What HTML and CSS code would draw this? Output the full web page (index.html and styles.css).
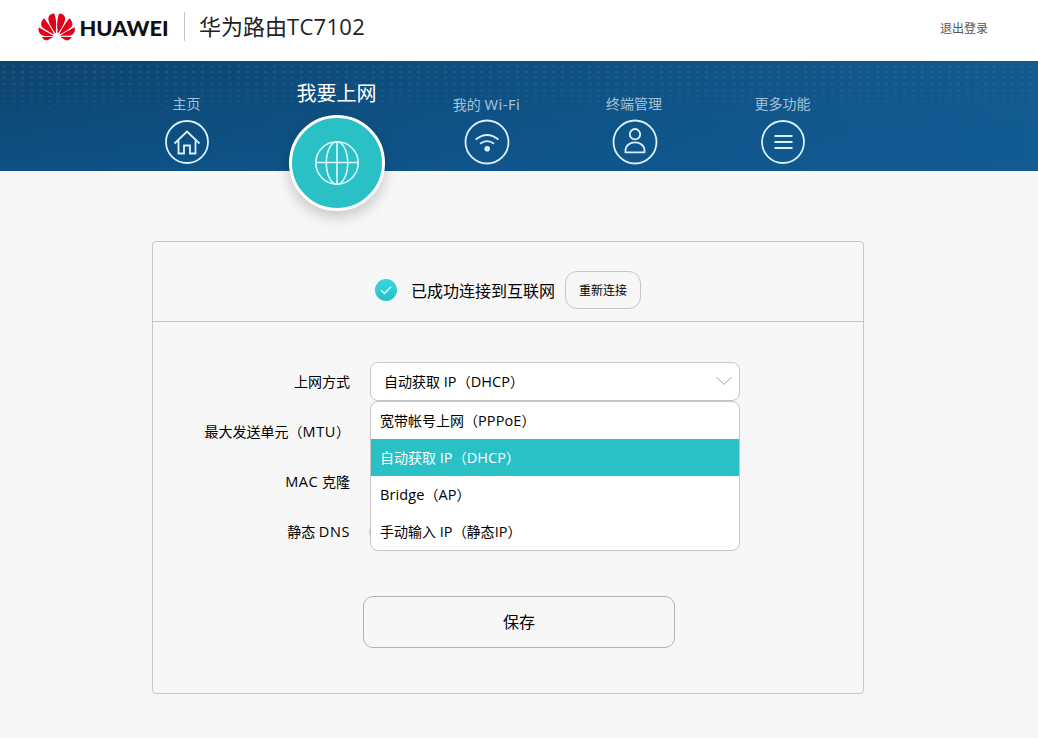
FILE: index.html
```html
<!DOCTYPE html>
<html lang="zh-CN">
<head>
<meta charset="utf-8">
<title>华为路由TC7102</title>
<link rel="stylesheet" href="styles.css">
</head>
<body>
<header class="header">
  <svg class="logo" width="130" height="30" viewBox="0 0 130 30">
    <g transform="translate(.5 -2.900) scale(1.52 1.49)" fill="#e4001b"><path d="M3.67 6.14S1.82 7.91 1.72 9.78v.35c.08 1.51 1.22 2.4 1.22 2.4 1.83 1.79 6.26 4.04 7.3 4.55 0 0 .06.03.1-.01l.02-.04v-.04C7.52 10.8 3.67 6.14 3.67 6.14zM9.65 18.6c-.02-.08-.1-.08-.1-.08l-7.38.26c.8 1.43 2.15 2.53 3.56 2.2.96-.25 3.16-1.78 3.88-2.3.06-.05.04-.09.04-.09zm.08-.78C6.49 15.63.21 12.28.21 12.28c-.15.46-.2.9-.21 1.3v.07c0 1.07.4 1.82.4 1.82.8 1.69 2.34 2.2 2.34 2.2.7.3 1.4.31 1.4.31.12.02 4.4 0 5.54 0 .05 0 .08-.05.08-.05v-.06c0-.03-.03-.05-.03-.05zM9.06 3.19a3.42 3.42 0 00-2.57 3.15v.41c.03.6.16 1.05.16 1.05.66 2.9 3.86 7.65 4.55 8.65.05.05.1.03.1.03a.1.1 0 00.06-.1c1.06-10.6-1.11-13.42-1.11-13.42-.32.02-1.19.23-1.19.23zm8.299 2.27s-.49-1.8-2.44-2.28c0 0-.57-.14-1.17-.22 0 0-2.18 2.81-1.12 13.43.01.07.06.08.06.08.07.03.1-.03.1-.03.72-1.03 3.9-5.76 4.55-8.64 0 0 .36-1.4.02-2.34zm-2.92 13.07s-.07 0-.09.05c0 0-.01.07.03.1.7.51 2.85 2 3.88 2.3 0 0 .16.05.43.06h.14c.69-.02 1.9-.37 3-2.26l-7.4-.25zm7.83-8.41c.14-2.06-1.94-3.97-1.94-3.98 0 0-3.85 4.66-6.67 10.8 0 0-.03.08.02.13l.04.01h.06c1.06-.53 5.46-2.77 7.28-4.54 0 0 1.15-.93 1.21-2.42zm1.52 2.14s-6.28 3.37-9.52 5.55c0 0-.05.04-.03.11 0 0 .03.06.07.06 1.16 0 5.56 0 5.67-.02 0 0 .57-.02 1.27-.29 0 0 1.56-.5 2.37-2.27 0 0 .73-1.45.17-3.14z"/></g>
    <text class="wordmark" x="41.500" y="23.500" textLength="89" lengthAdjust="spacingAndGlyphs">HUAWEI</text>
  </svg>
  <h1 class="title">华为路由<span class="model">TC7102</span></h1>
  <a class="logout">退出登录</a>
</header>
<nav class="nav">
  <a class="item"><span class="label">主页</span>
    <svg class="icon" width="46" height="46" viewBox="0 0 46 46"><circle cx="23" cy="23" r="21"/><path d="M10.500 24.500 23 12.500 35.500 24.500M14.500 21.500V34.500H20V26.500H26V34.500H31.500V21.500"/></svg></a>
  <a class="item active"><span class="label">我要上网</span>
    <span class="disc"><svg width="46" height="46" viewBox="0 0 46 46"><circle cx="23" cy="23" r="21.200"/><ellipse cx="23" cy="23" rx="10.700" ry="21.200"/><path d="M23 1.800V44.200M1.800 22.500H44.200"/></svg></span></a>
  <a class="item"><span class="label">我的 <span class="latin wifi">Wi-Fi</span></span>
    <svg class="icon" width="46" height="46" viewBox="0 0 46 46"><circle cx="23" cy="23" r="21.500"/><path d="M11.700 20.500Q23 11.500 34.500 20.500M16.200 24.800Q23 19.500 30 24.800"/><circle class="dot" cx="23.200" cy="29.800" r="2.800"/></svg></a>
  <a class="item terminal"><span class="label">终端管理</span>
    <svg class="icon" width="46" height="46" viewBox="0 0 46 46"><circle cx="23" cy="23" r="21.500"/><circle cx="23" cy="15.200" r="5.200"/><path d="M13.500 33.300V31.500C13.500 20.700 32.500 20.700 32.500 31.500V33.300Z"/></svg></a>
  <a class="item more"><span class="label">更多功能</span>
    <svg class="icon" width="46" height="46" viewBox="0 0 46 46"><circle cx="23" cy="23" r="21"/><path d="M14.500 17H32.500M14.500 23H32.500M14.500 29H32.500"/></svg></a>
</nav>
<main class="panel">
  <section class="status">
    <svg width="22" height="22" viewBox="0 0 22 22"><defs><linearGradient id="ok" x1="0" y1="0" x2="0" y2="1"><stop offset="0" stop-color="#36dae2"/><stop offset="1" stop-color="#28bfc7"/></linearGradient></defs><circle cx="11" cy="11" r="11" fill="url(#ok)"/><path d="M6 11.200 9.500 14.500 16.200 7.600" fill="none" stroke="#e9ffff" stroke-width="1.300"/></svg>
    <span class="message">已成功连接到互联网</span>
    <button class="reconnect">重新连接</button>
  </section>
  <section class="form">
    <div class="row"><label class="name">上网方式</label>
      <div class="select"><span>自动获取 <span class="latin">IP</span>（<span class="latin">DHCP</span>）</span>
        <svg class="chevron" width="16" height="10" viewBox="0 0 16 10"><path d="M.5 1 8 8.500 15.500 1" fill="none" stroke="#a5a5a5"/></svg>
        <ul class="menu">
          <li>宽带帐号上网（<span class="latin">PPPoE</span>）</li>
          <li class="chosen">自动获取 <span class="latin">IP</span>（<span class="latin">DHCP</span>）</li>
          <li><span class="latin">Bridge</span>（<span class="latin">AP</span>）</li>
          <li>手动输入 <span class="latin">IP</span>（静态<span class="latin">IP</span>）</li>
        </ul>
      </div></div>
    <div class="row"><label class="name">最大发送单元（<span class="latin caps">MTU</span>）</label></div>
    <div class="row"><label class="name"><span class="latin caps">MAC</span> 克隆</label></div>
    <div class="row"><label class="name">静态 <span class="latin caps">DNS</span></label><span class="toggle"></span></div>
    <button class="save">保存</button>
  </section>
</main>
</body>
</html>
```
FILE: styles.css
```css
* { box-sizing: border-box; }
body {
  margin: 0;
  height: 738px;
  overflow: hidden;
  background: #f7f7f7;
  color: #000;
  font: 14px/20px "Open Sans", "Noto Sans CJK SC", sans-serif;
}
button { font: inherit; color: #000; background: #f7f7f7; padding: 0; }
.latin { font-size: 14.5px; letter-spacing: 0.1px; }
.caps { letter-spacing: 0.6px; }
.wifi { font-family: "Noto Sans", sans-serif; font-size: 14.5px; letter-spacing: 0.5px; }

.header {
  display: flex;
  align-items: center;
  height: 61px;
  padding: 0 50px 7px 38px;
  background: #fff;
}
.logo { display: block; }
.wordmark { font-family: "Lato", sans-serif; font-size: 20px; font-weight: 900; fill: #111; }
.title {
  margin: -1px 0 0 16px;
  padding-left: 14px;
  border-left: 1px solid #c4c4c4;
  font-size: 22px;
  font-weight: 400;
  line-height: 29px;
  color: #222;
}
.model { letter-spacing: 0.3px; }
.logout { margin: 3px 0 0 auto; font-size: 12px; color: #555; }

.nav {
  position: relative;
  display: flex;
  height: 110px;
  padding-left: 112px;
  background:
    linear-gradient(to bottom, transparent, rgba(16, 90, 148, .55)),
    linear-gradient(100deg, #0c446e, #0e4e7f 45%, #125b90);
}
.nav::before {
  content: "";
  position: absolute;
  inset: 0;
  background: radial-gradient(ellipse at center, rgba(75, 139, 172, .2) 0 1.3px, transparent 2.4px) 0 2px / 9px 6px;
  -webkit-mask-image: linear-gradient(to bottom, #000 15%, transparent 65%);
  mask-image: linear-gradient(to bottom, #000 15%, transparent 65%);
}
.item {
  position: relative;
  display: flex;
  flex-direction: column;
  align-items: center;
  width: 150px;
  padding-top: 33px;
  color: #a4c2d7;
}
.label { margin-left: -1px; white-space: nowrap; height: 20px; }
.terminal { width: 145px; }
.more { width: 152px; }
.icon { margin-top: 5px; }
.item svg { fill: none; stroke: #d8f1fc; stroke-width: 1.8; flex: none; }
.item .dot { fill: #d8f1fc; stroke: none; }
.active { padding-top: 21px; color: #fff; font-size: 20px; line-height: 24px; }
.active .label { height: 24px; }
.disc {
  display: grid;
  place-items: center;
  width: 96px;
  height: 96px;
  margin-top: 9px;
  flex: none;
  border: 3px solid #fff;
  border-radius: 50%;
  background: #29c0c6;
  box-shadow: 0 6px 14px rgba(0, 0, 0, .2);
}
.disc svg { stroke: #dcfaff; stroke-width: 1.6; }

.panel {
  width: 712px;
  height: 453px;
  margin: 70px 0 0 152px;
  border: 1px solid #c6c6c6;
  border-radius: 4px;
}
.status {
  display: flex;
  align-items: center;
  height: 80px;
  padding: 17px 0 0 222px;
  border-bottom: 1px solid #c6c6c6;
}
.message { margin: 2px 0 0 14px; font-size: 16px; line-height: 24px; }
.reconnect {
  width: 76px;
  height: 38px;
  margin-left: 10px;
  padding-top: 1px;
  border: 1px solid #c6c6c6;
  border-radius: 12px;
  font-size: 12px;
}
.form { padding-top: 35px; }
.row { display: flex; align-items: center; height: 50px; }
.name { width: 197px; text-align: right; white-space: nowrap; }
.select {
  position: relative;
  display: flex;
  align-items: center;
  justify-content: space-between;
  width: 370px;
  height: 39px;
  margin: 0 0 1px 20px;
  padding: 0 7px 0 13px;
  border: 1px solid #c6c6c6;
  border-radius: 8px;
  background: #fff;
}
.chevron { margin-bottom: 2px; }
.menu {
  position: absolute;
  z-index: 2;
  top: 38px;
  left: -1px;
  width: 370px;
  margin: 0;
  padding: 0;
  list-style: none;
  overflow: hidden;
  border: 1px solid #c6c6c6;
  border-radius: 8px;
  background: #fff;
}
.menu li { height: 37px; padding-left: 9px; line-height: 37px; }
.menu .chosen { background: #29c0c6; color: #fff; }
.toggle {
  width: 40px;
  height: 20px;
  margin-left: 19px;
  border: 1px solid #c6c6c6;
  border-radius: 10px;
}
.save {
  display: block;
  width: 312px;
  height: 52px;
  margin: 39px 0 0 210px;
  border: 1px solid #b3b3b3;
  border-radius: 10px;
  font-size: 16px;
}
```
